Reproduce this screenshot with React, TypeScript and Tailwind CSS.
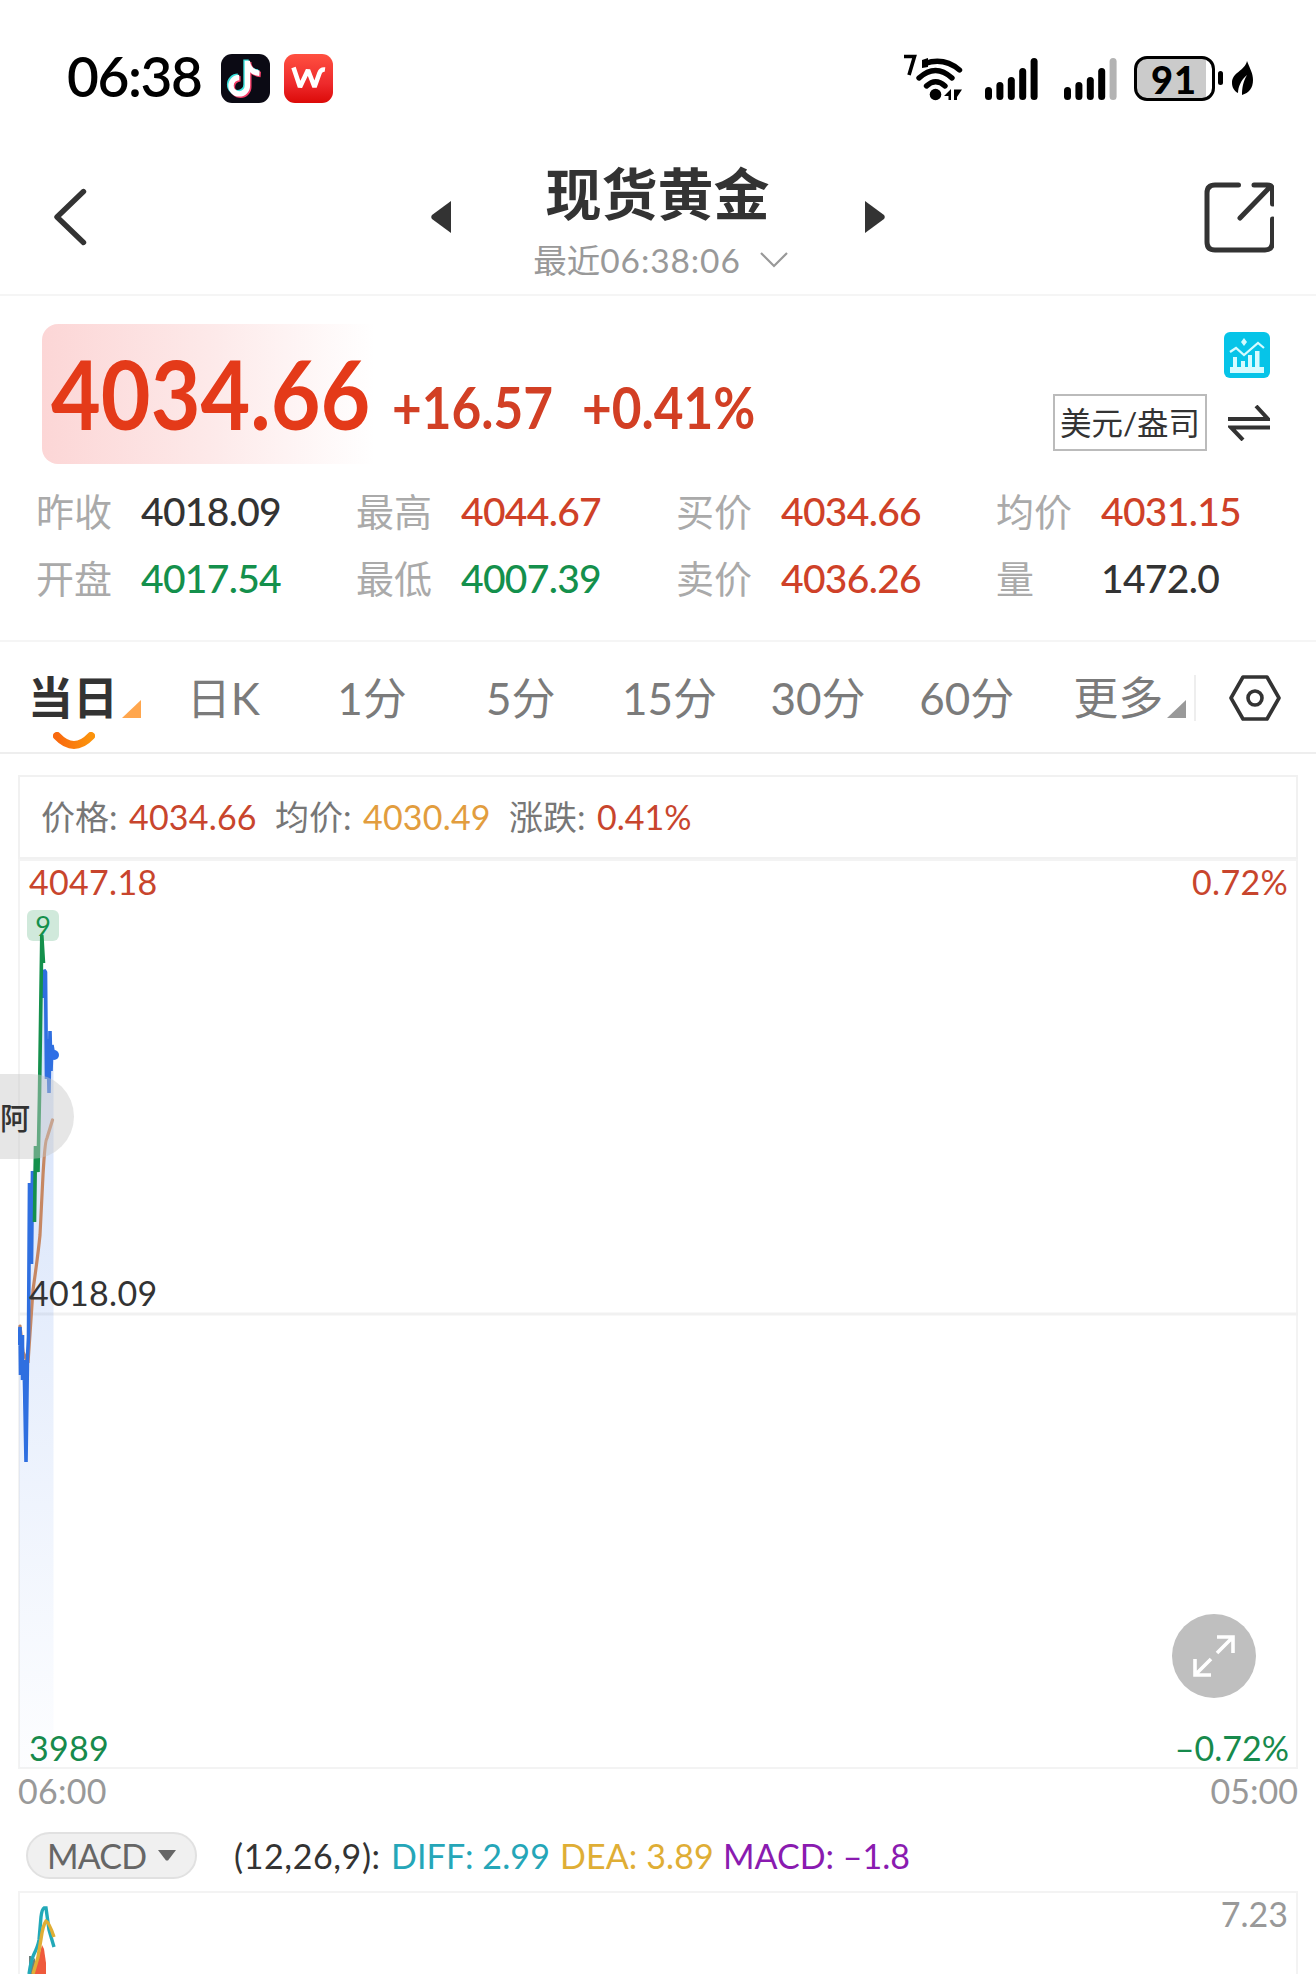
import { ReactNode } from 'react'
import clsx from 'clsx'

interface QuoteProps {
  label: string
  value: string
  color: string
}

const quotes: QuoteProps[] = [
  { label: '昨收', value: '4018.09', color: 'text-[#333333]' },
  { label: '最高', value: '4044.67', color: 'text-[#cf4128]' },
  { label: '买价', value: '4034.66', color: 'text-[#cf4128]' },
  { label: '均价', value: '4031.15', color: 'text-[#cf4128]' },
  { label: '开盘', value: '4017.54', color: 'text-[#14904c]' },
  { label: '最低', value: '4007.39', color: 'text-[#14904c]' },
  { label: '卖价', value: '4036.26', color: 'text-[#cf4128]' },
  { label: '量', value: '1472.0', color: 'text-[#333333]' },
]

const tabs = ['日K', '1分', '5分', '15分', '30分', '60分']

function Signal({ weak }: { weak?: boolean }) {
  return (
    <svg width="53" height="42" viewBox="0 0 53 42" className="mt-0.5">
      <rect x="0" y="29" width="7" height="13" rx="3.5" />
      <rect x="11.4" y="24" width="7" height="18" rx="3.5" />
      <rect x="22.8" y="19" width="7" height="23" rx="3.5" />
      <rect x="34.2" y="10" width="7" height="32" rx="3.5" />
      <rect x="45.6" y="0" width="7" height="42" rx="3.5" fill={weak ? '#b3b3b3' : '#000'} />
    </svg>
  )
}

function StatusBar() {
  return (
    <div className="flex h-[140px] items-center pt-4 pl-[67px] pr-[62px] text-black">
      <span className="mb-1 w-[154px] text-[55px] leading-[60px] font-semibold tracking-[-1.4px]">06:38</span>
      <svg width="49" height="49" viewBox="0 0 49 49" className="mr-3.5">
        <rect width="49" height="49" rx="11" fill="#0b0a14" />
        <g fill="none" strokeWidth="5.4">
          <path d="M26 6v25a8.2 8.2 0 1 1-8.2-8.2M26 8c1.5 6 5.5 10 12 10.5" stroke="#38e0dc" transform="translate(-1 -.6)" />
          <path d="M26 6v25a8.2 8.2 0 1 1-8.2-8.2M26 8c1.5 6 5.5 10 12 10.5" stroke="#f5406a" transform="translate(1.8 2)" />
          <path d="M26 6v25a8.2 8.2 0 1 1-8.2-8.2M26 8c1.5 6 5.5 10 12 10.5" stroke="#fff" transform="translate(.4 .7)" />
        </g>
      </svg>
      <svg width="49" height="49" viewBox="0 0 49 49">
        <defs>
          <linearGradient id="wps" x1="0" y1="0" x2="0" y2="1">
            <stop offset="0" stopColor="#ff5040" />
            <stop offset="0.6" stopColor="#ee2a2c" />
            <stop offset="1" stopColor="#dc0a08" />
          </linearGradient>
        </defs>
        <rect width="49" height="49" rx="11" fill="url(#wps)" />
        <path d="M9.500 13.500L16 33 24 16l6.500 17 5-14q1.500-4 5.500-3.500" fill="none" stroke="#fff" strokeWidth="4.600" strokeLinejoin="bevel" />
      </svg>

      <div className="ml-auto flex items-center">
        <svg width="60" height="48" viewBox="0 0 60 48" className="mr-[21px]">
          <path d="M0 2.500h10.500L5 21" fill="none" stroke="#000" strokeWidth="3.600" />
          <g fill="none" stroke="#000" strokeWidth="5.400" strokeLinecap="round">
            <path d="M21 9.500Q40 3 55.500 16" />
            <path d="M15 24Q31.500 9 48 24" />
            <path d="M22.500 32Q31.500 23.500 41 32" />
          </g>
          <path d="M18 6v8l6-1V4z" />
          <circle cx="31.500" cy="40.500" r="5.800" />
          <path d="M40 42l7-7v11h-2.500v-4zM50 35.500h8L53 43v3h-3z" />
        </svg>
        <Signal />
        <span className="w-[26px]" />
        <Signal weak />
        <div className="ml-[17px] flex h-[45px] w-[81px] items-center justify-center rounded-[13px] border-[3px] border-black bg-[linear-gradient(90deg,#cbcbcb_92%,#fff_92%)]">
          <span className="pt-0.5 text-[38px] leading-[40px] font-black tracking-[1px]">91</span>
        </div>
        <span className="ml-[3px] h-3.5 w-[5.5px] rounded-full bg-black" />
        <svg width="22" height="35" viewBox="0 0 22 35" className="ml-[9px]">
          <path d="M15 0C18 8 21 12 21 19c0 8-4 13-11 15 0-7 1-13 5-20C9 19 6 26 6 32 2 30 0 26 0 22 0 11 13 10 15 0z" />
        </svg>
      </div>
    </div>
  )
}

function Header() {
  return (
    <header className="flex h-[156px] items-center justify-between border-b-2 border-[#f5f5f5] pl-[53px] pr-[42px] text-[#333333]">
      <svg width="34" height="58" viewBox="0 0 34 58" fill="none" stroke="currentColor" strokeWidth="5.400" strokeLinecap="round" strokeLinejoin="round">
        <path d="M30.500 3.500L4 29l26.500 25.500" />
      </svg>
      <div className="flex items-center pl-6">
        <svg width="20" height="32" viewBox="0 0 20 32" fill="currentColor">
          <path d="M20 0v32L1 18q-1.500-2 0-4z" />
        </svg>
        <div className="flex w-[414px] flex-col items-center pt-[11px]">
          <h1 className="text-[56px] leading-[64px] font-bold">现货黄金</h1>
          <div className="flex items-center pt-2.5 pl-1.5 text-[#999999]">
            <span className="text-[33.5px] leading-[48px]">最近<span className="tracking-[0.9px]">06:38:06</span></span>
            <svg width="28" height="16" viewBox="0 0 28 16" fill="none" stroke="currentColor" strokeWidth="2.200" className="ml-[19px]">
              <path d="M1 1l13 13L27 1" />
            </svg>
          </div>
        </div>
        <svg width="20" height="32" viewBox="0 0 20 32" fill="currentColor">
          <path d="M0 0v32l19-14q1.500-2 0-4z" />
        </svg>
      </div>
      <svg width="70" height="71" viewBox="0 0 70 71" fill="none" stroke="currentColor" strokeWidth="5" strokeLinecap="round">
        <path d="M34.500 3H11q-8 0-8 8v49q0 8 8 8h50q7.500 0 7.500-8V37M50 3h13q5.500 0 5.500 5v14M36 36L67 4" />
      </svg>
    </header>
  )
}

function PricePanel() {
  return (
    <section className="h-[346px] border-b-2 border-[#f5f5f5] pt-7">
      <div className="flex h-[140px] pl-[42px] pr-[46px]">
        <div className="flex w-[350px] items-center rounded-2xl bg-linear-to-r from-[#fcd6d6] via-[#fdeaea] to-white to-95% pl-[9px]">
          <span className="mb-[3px] origin-left scale-x-[0.895] text-[96px] leading-[137px] font-bold text-[#e43a19]">4034.66</span>
        </div>
        <div className="flex items-end pb-[19px] text-[57px] leading-[76px] font-bold text-[#d23f24]">
          <span className="w-[190px] origin-left scale-x-[0.9]">+16.57</span>
          <span className="origin-left scale-x-[0.9]">+0.41%</span>
        </div>
        <div className="ml-auto flex flex-col items-end pt-2">
          <svg width="46" height="46" viewBox="0 0 46 46">
            <rect width="46" height="46" rx="6" fill="#06c4e8" />
            <g fill="#d5fbff">
              <path d="M6 35h34v6H6zM9 25h4v11H9zM17 29h4v7h-4zM24 23h4v13h-4zM31 19h4.500v17H31z" />
              <path d="M20 6l3 4-3 4-3-4z" />
            </g>
            <path d="M6 20l6-4 8 7 14-12 6 5" fill="none" stroke="#d5fbff" strokeWidth="2.200" />
          </svg>
          <div className="flex items-center pt-4">
            <span className="mr-[21px] flex h-[57px] w-[154px] items-center justify-center border-2 border-[#bbbbbb] text-[31.5px] leading-[40px] text-[#333333]">美元/盎司</span>
            <svg width="42" height="36" viewBox="0 0 42 36" fill="none" stroke="#333" strokeWidth="4">
              <path d="M0 14h40L28 1M42 22.500H3L15 35" />
            </svg>
          </div>
        </div>
      </div>
      <div className="grid grid-cols-[repeat(4,320px)] pt-[13px] pl-9">
        {quotes.map(quote => (
          <div key={quote.label} className="flex h-[67px] items-center">
            <span className="w-[105px] text-[38px] leading-[50px] text-[#aaaaaa]">{quote.label}</span>
            <span className={clsx('text-[39px] leading-[50px] font-medium tracking-[-0.7px]', quote.color)}>{quote.value}</span>
          </div>
        ))}
      </div>
    </section>
  )
}

function Corner({ className }: { className: string }) {
  return (
    <svg width="19" height="18" viewBox="0 0 19 18" fill="currentColor" className={className}>
      <path d="M19 0v18H0z" />
    </svg>
  )
}

function Tab({ children }: { children: ReactNode }) {
  return <div className="flex w-[148.7px] items-center justify-center">{children}</div>
}

function TabBar() {
  return (
    <nav className="flex h-28 items-center border-b-2 border-[#eeeeee] pt-px text-[44px] leading-[60px] text-[#7b7b7b]">
      <div className="relative flex w-[149px] items-center pl-7 text-[45px] font-bold text-[#333333]">
        当日
        <Corner className="mt-[22px] ml-1 text-[#ffa64d]" />
        <svg width="42" height="18" viewBox="0 0 42 18" className="absolute top-[64px] left-[53px]">
          <defs>
            <linearGradient id="smile">
              <stop offset="0" stopColor="#f9690e" />
              <stop offset="1" stopColor="#fb930c" />
            </linearGradient>
          </defs>
          <path d="M4 4Q21 22 38 4" fill="none" stroke="url(#smile)" strokeWidth="8" strokeLinecap="round" />
        </svg>
      </div>
      {tabs.map(tab => <Tab key={tab}>{tab}</Tab>)}
      <div className="flex w-[153px] items-center pl-8 text-[45px]">
        更多
        <Corner className="mt-[22px] ml-1 text-[#999999]" />
      </div>
      <span className="h-[46px] w-0.5 bg-[#eeeeee]" />
      <svg width="52" height="46" viewBox="0 0 52 46" fill="none" stroke="#333" strokeWidth="3.600" strokeLinejoin="round" className="ml-[33px]">
        <path d="M14 2h24l12 21-12 21H14L2 23z" />
        <circle cx="26" cy="23" r="7" />
      </svg>
    </nav>
  )
}

function PriceChart() {
  return (
    <div className="relative h-[910px] border-2 border-[#f3f3f3] text-[34px] leading-[40px]">
      <svg width="1280" height="910" viewBox="18 859 1280 910" className="absolute -top-0.5 -left-0.5">
        <defs>
          <linearGradient id="area" x1="0" y1="0" x2="0" y2="1">
            <stop offset="0" stopColor="#2f6fe6" stopOpacity="0.220" />
            <stop offset="1" stopColor="#2f6fe6" stopOpacity="0.010" />
          </linearGradient>
        </defs>
        <path d="M18 1314H1298" stroke="#f1f1f1" strokeWidth="3" />
        <path d="M19 1345L26 1460 30 1185 38 1140 42 940 48 1090 53.500 1055V1768H19z" fill="url(#area)" />
        <path d="M20 1326L23 1352 28 1363 33 1290Q38 1255 40 1235L43 1175Q45 1140 47 1138L52.500 1120" fill="none" stroke="#c68763" strokeWidth="3.200" strokeLinecap="round" />
        <g fill="none" strokeWidth="3.600" strokeLinejoin="bevel">
          <path d="M18.500 1345l1.500-18 .5 48 2-40 0 45 1.500-20 2 102 1.500-105 1-20 1-154 2 81 1-93 1.500 50" stroke="#2f6fe0" />
          <path d="M43.500 998l.5-28 1.500 2 1 107 1.500-40 1 54 1-62 1 40 1-26 2 12" stroke="#2f6fe0" />
          <path d="M34.500 1222l1-76 2.500 26L39.500 1095 41.800 935l1.700 28" stroke="#14904c" />
        </g>
        <circle cx="54" cy="1055" r="5" fill="#2f6fe6" />
      </svg>
      <span className="absolute top-[49px] left-[7px] flex h-[31px] w-8 items-center justify-center rounded-md bg-[#14904c]/20 text-[27px] text-[#14904c]">9</span>
      <span className="absolute top-px left-[9px] tracking-[0.3px] text-[#c8452d]">4047.18</span>
      <span className="absolute top-px right-2 tracking-[0.3px] text-[#c8452d]">0.72%</span>
      <span className="absolute top-[412px] left-[9px] tracking-[0.3px] text-[#333333]">4018.09</span>
      <span className="absolute -bottom-px left-[9px] tracking-[0.3px] text-[#178a4c]">3989</span>
      <span className="absolute right-[7px] -bottom-px text-[#178a4c]">–0.72%</span>
      <button className="absolute right-10 bottom-[69px] flex size-[84px] items-center justify-center rounded-full bg-[#bfbfbf]">
        <svg width="42" height="42" viewBox="0 0 42 42" fill="none" stroke="#fff" strokeWidth="3.600">
          <path d="M24 2h16v16M39 3L24 18M18 40H2V24M3 39l15-15" />
        </svg>
      </button>
      {/* Etiqueta flotante pegada al borde */}
      <div className="absolute top-[213px] -left-5 flex h-[85px] w-[74px] items-center rounded-r-full bg-[#c8c8c8]/45 text-[30px] font-medium text-[#333333]">阿</div>
    </div>
  )
}

function MacdChart() {
  return (
    <div className="flex h-[83px] justify-between border-2 border-b-0 border-[#f3f3f3] pr-2 text-[34px] leading-[42px] text-[#999999]">
      <svg width="60" height="81" viewBox="20 1893 60 81" fill="none" strokeWidth="3.400">
        <path d="M29 1974v-18h2v6l4-4v16z" fill="#6d7f7c" />
        <path d="M34 1974L42 1945l2 4 2 14v11z" fill="#ef5a3c" />
        <path d="M29 1974q2-14 5-20 4-8 5-14l2-23q1-8 3-9h2l3 22 5 17" stroke="#23a9b8" />
        <path d="M33 1974l5-17 3-18q2-14 5-18 3 1 8 16" stroke="#e0ae35" />
      </svg>
      <span>7.23</span>
    </div>
  )
}

export default function App() {
  return (
    <main className="flex h-[1974px] w-[1316px] flex-col overflow-hidden bg-white font-['Lato','Noto_Sans_CJK_SC',sans-serif]">
      <StatusBar />
      <Header />
      <PricePanel />
      <TabBar />
      <div className="mt-[21px] ml-[18px] w-[1280px]">
        <div className="flex h-[84px] items-center border-2 border-[#f1f1f1] pl-[21px] text-[34px] leading-[50px] text-[#777777]">
          <span className="w-[88px]">价格:</span>
          <span className="w-[146px] tracking-[0.2px] text-[#c8452d]">4034.66</span>
          <span className="w-[88px]">均价:</span>
          <span className="w-[146px] tracking-[0.2px] text-[#e29d3e]">4030.49</span>
          <span className="w-[88px]">涨跌:</span>
          <span className="text-[#c8452d]">0.41%</span>
        </div>
        <PriceChart />
        <div className="flex justify-between text-[34px] leading-[44px] text-[#999999]">
          <span className="tracking-[0.3px]">06:00</span>
          <span>05:00</span>
        </div>
        <div className="mt-[19px] mb-3 flex h-[47px] items-center pl-2 text-[34px] leading-[44px]">
          <button className="mr-[37px] flex h-[47px] w-[171px] items-center rounded-full border-2 border-[#e1e1e1] bg-[#f0f0f0] pl-[19px] tracking-[-0.8px] text-[#666666]">
            MACD
            <svg width="18" height="11" viewBox="0 0 18 11" fill="currentColor" className="ml-3">
              <path d="M0 0h18L10 10.500H8z" />
            </svg>
          </button>
          <span className="w-[157px] tracking-[0.6px] text-[#333333]">(12,26,9):</span>
          <span className="w-[169px] tracking-[0.1px] text-[#25a6b8]">DIFF: 2.99</span>
          <span className="w-[163px] tracking-[0.1px] text-[#dfae35]">DEA: 3.89</span>
          <span className="text-[#8a1bb0]">MACD: –1.8</span>
        </div>
        <MacdChart />
      </div>
    </main>
  )
}
